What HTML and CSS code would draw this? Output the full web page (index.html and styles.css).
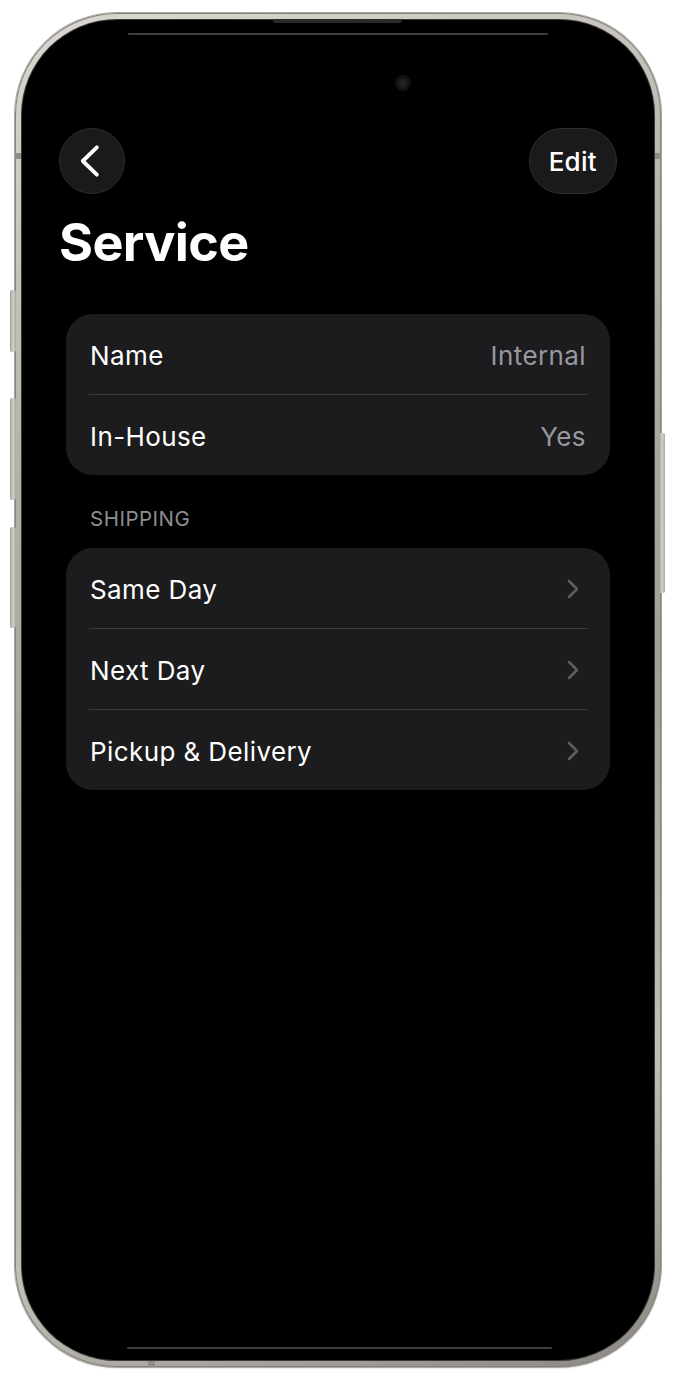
FILE: index.html
```html
<!DOCTYPE html>
<html lang="en">
<head>
<meta charset="utf-8">
<title>Service</title>
<link rel="stylesheet" href="styles.css">
</head>
<body>
<div class="device">
  <span class="btn-side btn-action"></span>
  <span class="btn-side btn-vol-up"></span>
  <span class="btn-side btn-vol-down"></span>
  <span class="btn-side btn-power"></span>
  <span class="band band-l"></span>
  <span class="band band-r"></span>
  <span class="band band-b"></span>
  <span class="top-notch"></span>
  <div class="screen">
    <span class="speaker speaker-top"></span>
    <span class="camera"></span>
    <span class="speaker speaker-bottom"></span>

    <div class="nav">
      <button class="back" aria-label="Back">
        <svg width="66" height="66" viewBox="0 0 66 66"><path d="M38 19 L23.5 33 L38 47" fill="none" stroke="#ffffff" stroke-width="4" stroke-linecap="round" stroke-linejoin="round"/></svg>
      </button>
      <button class="edit">Edit</button>
    </div>

    <h1 class="title">Service</h1>

    <div class="card">
      <div class="row"><span class="label">Name</span><span class="value">Internal</span></div>
      <div class="row"><span class="label">In-House</span><span class="value">Yes</span></div>
    </div>

    <div class="section-header">SHIPPING</div>

    <div class="card">
      <div class="row"><span class="label">Same Day</span><svg class="chev" width="12" height="20" viewBox="0 0 12 20"><path d="M2 2 L10 10 L2 18" fill="none" stroke="#5c5c61" stroke-width="2.6" stroke-linecap="round" stroke-linejoin="round"/></svg></div>
      <div class="row"><span class="label">Next Day</span><svg class="chev" width="12" height="20" viewBox="0 0 12 20"><path d="M2 2 L10 10 L2 18" fill="none" stroke="#5c5c61" stroke-width="2.6" stroke-linecap="round" stroke-linejoin="round"/></svg></div>
      <div class="row"><span class="label">Pickup &amp; Delivery</span><svg class="chev" width="12" height="20" viewBox="0 0 12 20"><path d="M2 2 L10 10 L2 18" fill="none" stroke="#5c5c61" stroke-width="2.6" stroke-linecap="round" stroke-linejoin="round"/></svg></div>
    </div>
  </div>
</div>
</body>
</html>
```

FILE: styles.css
```css
html, body {
  margin: 0;
  padding: 0;
  background: #ffffff;
}

body {
  width: 675px;
  height: 1380px;
  overflow: hidden;
  font-family: "Inter", "Noto Sans", "Liberation Sans", sans-serif;
}

.device {
  position: relative;
  box-sizing: border-box;
  margin: 13px 0 0 15px;
  width: 646px;
  height: 1354px;
  padding: 7px;
  border-radius: 102px;
  background: linear-gradient(160deg, #dcd9d4 0%, #b3afa9 30%, #a29e98 55%, #c2beb8 80%, #8a8782 100%);
  box-shadow: inset 0 0 0 1px #85827d, 0 0 0 1px #aaa7a1, 0 1px 2px rgba(0,0,0,0.25);
}

.btn-side {
  position: absolute;
  width: 6px;
  border-radius: 2px;
  background: linear-gradient(90deg, #9d9993, #d6d3ce 50%, #a9a59f);
}
.btn-action { left: -5px; top: 277px; height: 62px; }
.btn-vol-up { left: -5px; top: 385px; height: 102px; }
.btn-vol-down { left: -5px; top: 514px; height: 101px; }
.btn-power { right: -4px; top: 420px; height: 160px; }

.band {
  position: absolute;
  background: #8f8b86;
}
.band-l { left: 0; top: 140px; width: 7px; height: 6px; }
.band-r { right: 0; top: 140px; width: 7px; height: 6px; }
.band-b { bottom: 0; left: 133px; width: 7px; height: 7px; }

.top-notch {
  position: absolute;
  top: 6px;
  left: 258px;
  width: 129px;
  height: 4px;
  border-radius: 0 0 3px 3px;
  background: #2a2a2a;
  z-index: 2;
}

.screen {
  position: relative;
  box-sizing: border-box;
  height: 100%;
  padding-top: 108px;
  border-radius: 95px;
  background: #000000;
  box-shadow: 0 0 0 1px #3a3936;
  overflow: hidden;
}

.speaker {
  position: absolute;
  height: 2px;
  background: #3f3f3f;
  border-radius: 1px;
}
.speaker-top { top: 13px; left: 106px; width: 420px; }
.speaker-bottom { bottom: 11px; left: 105px; width: 425px; }

.camera {
  position: absolute;
  top: 56px;
  left: 374px;
  width: 14px;
  height: 14px;
  border-radius: 50%;
  background: radial-gradient(circle at 50% 50%, #2a2a2e 0%, #151517 55%, #0a0a0a 100%);
  box-shadow: 0 0 0 1px #141414;
}

.nav {
  display: flex;
  justify-content: space-between;
  align-items: center;
  padding: 0 37px;
}

.back {
  width: 66px;
  height: 66px;
  padding: 0;
  border-radius: 50%;
  border: 1px solid #2e2e30;
  background: #1a1a1b;
  display: flex;
  align-items: center;
  justify-content: center;
}
.back svg { display: block; }

.edit {
  height: 66px;
  padding: 0 19px;
  border-radius: 33px;
  border: 1px solid #2e2e30;
  background: #1a1a1b;
  color: #ffffff;
  font-family: "Inter", "Noto Sans", sans-serif;
  font-size: 26px;
  font-weight: 500;
  letter-spacing: 0.3px;
}

.title {
  margin: 18px 0 0;
  padding-left: 37px;
  color: #ffffff;
  font-size: 52px;
  font-weight: 700;
  line-height: 62px;
  letter-spacing: -0.6px;
}

.card {
  margin: 40px 44px 0;
  border-radius: 27px;
  background: #1c1c1e;
}

.row {
  display: flex;
  justify-content: space-between;
  align-items: center;
  height: 80px;
  margin: 0 23px;
  padding: 2px 1px 0;
  box-sizing: border-box;
}
.row + .row {
  border-top: 1px solid #3b3b3e;
  height: 81px;
}

.label {
  color: #ffffff;
  font-size: 26px;
  font-weight: 400;
  letter-spacing: 0.4px;
}

.value {
  color: #98989e;
  font-size: 26px;
  font-weight: 400;
  letter-spacing: 0.4px;
}

.chev {
  display: block;
  margin-right: 7px;
}

.section-header {
  margin: 32px 0 -23px;
  padding-left: 68px;
  color: #8d8d93;
  font-size: 20.5px;
  line-height: 24px;
  letter-spacing: 0.5px;
}
```
